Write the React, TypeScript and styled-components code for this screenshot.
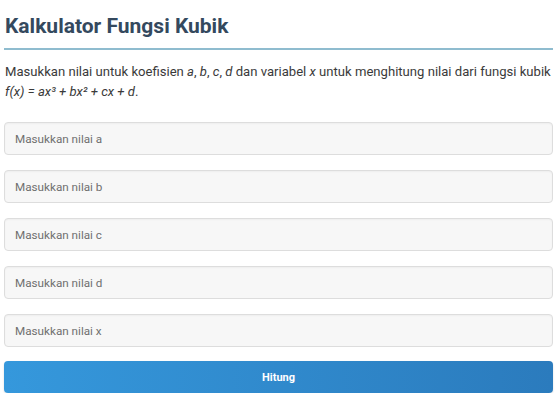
import styled, { createGlobalStyle } from 'styled-components'

const GlobalStyle = createGlobalStyle`
    body {
        margin: 0;
        background: #ffffff;
        font-family: Roboto, "Liberation Sans", sans-serif;
    }
`

const Page = styled.div`
    padding: 14px 2px 0 4px;
    display: flex;
    flex-direction: column;
`

const Title = styled.h1`
    margin: 0;
    padding: 0 0 10px 1px;
    font-size: 21px;
    font-weight: 700;
    color: #34495e;
    border-bottom: 2px solid #8fbccf;
`

const Intro = styled.p`
    margin: 12px 0 0 1px;
    font-size: 13.1px;
    line-height: 20px;
    color: #3a3a3a;
`

const Form = styled.div`
    margin-top: 20px;
    display: flex;
    flex-direction: column;
    gap: 15px;
`

const Field = styled.input`
    box-sizing: border-box;
    width: 100%;
    height: 33px;
    padding: 0 10px;
    font-family: Roboto, "Liberation Sans", sans-serif;
    font-size: 11.7px;
    color: #333333;
    background: #f7f7f7;
    border: 1px solid #dddddd;
    border-radius: 4px;
    box-shadow: inset 0 1px 2px rgba(0, 0, 0, 0.04);
    &::placeholder {
        color: #6f6f6f;
    }
`

const SubmitButton = styled.button`
    height: 32px;
    margin-top: -1px;
    font-family: Roboto, "Liberation Sans", sans-serif;
    font-size: 11px;
    font-weight: 700;
    color: #ffffff;
    background: linear-gradient(to right, #3598dc, #2b7bbd);
    border: none;
    border-radius: 4px;
    box-shadow: 0 1px 2px rgba(0, 0, 0, 0.15);
    cursor: pointer;
`

const fields = ['a', 'b', 'c', 'd', 'x']

export default function App() {
    return (
        <>
            <GlobalStyle />
            <Page>
                <Title>Kalkulator Fungsi Kubik</Title>
                <Intro>
                    Masukkan nilai untuk koefisien <i>a</i>, <i>b</i>, <i>c</i>, <i>d</i> dan variabel <i>x</i> untuk
                    menghitung nilai dari fungsi kubik <i>f(x) = ax³ + bx² + cx + d</i>.
                </Intro>
                <Form>
                    {fields.map((name) => (
                        <Field key={name} type="number" placeholder={`Masukkan nilai ${name}`} />
                    ))}
                    <SubmitButton>Hitung</SubmitButton>
                </Form>
            </Page>
        </>
    )
}
